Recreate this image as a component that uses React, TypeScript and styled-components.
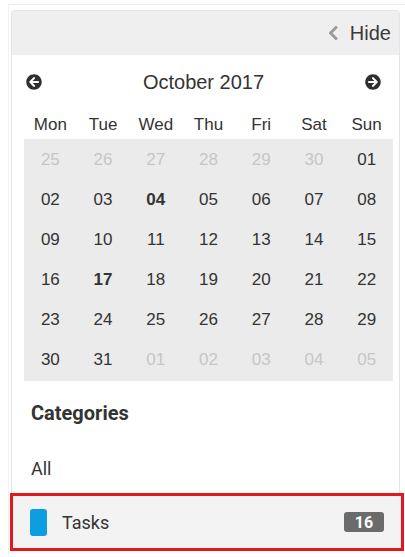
import React from "react";
import styled, { createGlobalStyle } from "styled-components";
import { FaArrowCircleLeft, FaArrowCircleRight } from "react-icons/fa";

const Global = createGlobalStyle`
  html, body { margin: 0; padding: 0; background: #fff; }
  body { font-family: "Liberation Sans", Arial, sans-serif; color: #333; }
`;

const Page = styled.div`
  width: 397px;
  height: 552px;
  margin: 4px 0 0 8px;
  border-top: 1px solid #ececec;
  border-left: 1px solid #f2f2f2;
  padding: 5px 0 0 2px;
  box-sizing: border-box;
`;

const Panel = styled.div`
  width: 389px;
  border: 1px solid #e4e4e4;
  border-bottom: none;
  border-radius: 4px 4px 0 0;
  box-sizing: border-box;
`;

const Header = styled.div`
  height: 44px;
  background: #efefef;
  border-radius: 3px 3px 0 0;
  display: flex;
  align-items: center;
  justify-content: flex-end;
  padding-right: 8px;
  font-size: 20px;
  color: #3a3a3a;
  gap: 12px;
`;

const HideIcon = styled.svg`
  width: 10px;
  height: 14px;
  color: #9b9b9b;
  margin-top: -1px;
`;

const CalBody = styled.div`
  padding: 12px 6px 0 12px;
`;

const Nav = styled.div`
  height: 30px;
  display: flex;
  align-items: center;
  justify-content: space-between;
  padding: 0 12px 0 2px;
  font-size: 20px;
  color: #333;
`;

const NavIcon = styled.span`
  display: flex;
  color: #2f2f2f;
  font-size: 16px;
`;

const DayNames = styled.div`
  margin-top: 14px;
  height: 28px;
  display: grid;
  grid-template-columns: repeat(7, 1fr);
  align-items: center;
  font-size: 17px;
  color: #333;
  text-align: center;
`;

const Grid = styled.div`
  display: grid;
  grid-template-columns: repeat(7, 1fr);
  grid-auto-rows: 40px;
  padding: 1px 0;
  background: #ebebeb;
  align-items: center;
  text-align: center;
  font-size: 17px;
`;

const Day = styled.div<{ $muted?: boolean; $bold?: boolean }>`
  color: ${(p) => (p.$muted ? "#c6c6c6" : "#333")};
  font-weight: ${(p) => (p.$bold ? 700 : 400)};
`;

const Categories = styled.div`
  font-family: Roboto, "Liberation Sans", sans-serif;
`;

const Heading = styled.div`
  margin: 20px 0 0 19px;
  height: 24px;
  line-height: 24px;
  font-size: 20px;
  font-weight: 700;
  color: #333;
`;

const Item = styled.div`
  margin: 33px 0 0 19px;
  height: 22px;
  line-height: 22px;
  font-size: 18px;
  color: #333;
`;

const TaskRow = styled.div`
  margin: 13px -5px 0 -2px;
  height: 52px;
  border: 3px solid #e5161c;
  background: #f3f3f3;
  display: flex;
  align-items: center;
  padding: 0 17px;
  font-size: 18px;
  color: #333;
`;

const Swatch = styled.span`
  width: 17px;
  height: 27px;
  border-radius: 3px;
  background: #0d9de0;
  margin-right: 15px;
`;

const Label = styled.span`
  flex: 1;
`;

const Badge = styled.span`
  width: 40px;
  height: 20px;
  border-radius: 3px;
  background: #6b6b6b;
  color: #fff;
  font-weight: 700;
  font-size: 16px;
  display: flex;
  align-items: center;
  justify-content: center;
`;

type Cell = { d: string; muted?: boolean; bold?: boolean };

const names = ["Mon", "Tue", "Wed", "Thu", "Fri", "Sat", "Sun"];

const cells: Cell[] = [
  ...["25", "26", "27", "28", "29", "30"].map((d) => ({ d, muted: true })),
  ...Array.from({ length: 31 }, (_, i) => {
    const n = i + 1;
    return { d: String(n).padStart(2, "0"), bold: n === 4 || n === 17 };
  }),
  ...["01", "02", "03", "04", "05"].map((d) => ({ d, muted: true })),
];

export default function App() {
  return (
    <>
      <Global />
      <Page>
        <Panel>
          <Header>
            <HideIcon viewBox="0 0 10 14">
              <polyline
                points="8,1.5 2.5,7 8,12.5"
                fill="none"
                stroke="currentColor"
                strokeWidth="3"
                strokeLinecap="round"
                strokeLinejoin="round"
              />
            </HideIcon>
            <span>Hide</span>
          </Header>
          <CalBody>
            <Nav>
              <NavIcon>
                <FaArrowCircleLeft />
              </NavIcon>
              <span>October 2017</span>
              <NavIcon>
                <FaArrowCircleRight />
              </NavIcon>
            </Nav>
            <DayNames>
              {names.map((n) => (
                <div key={n}>{n}</div>
              ))}
            </DayNames>
            <Grid>
              {cells.map((c, i) => (
                <Day key={i} $muted={c.muted} $bold={c.bold}>
                  {c.d}
                </Day>
              ))}
            </Grid>
          </CalBody>
          <Categories>
            <Heading>Categories</Heading>
            <Item>All</Item>
            <TaskRow>
              <Swatch />
              <Label>Tasks</Label>
              <Badge>16</Badge>
            </TaskRow>
          </Categories>
        </Panel>
      </Page>
    </>
  );
}
